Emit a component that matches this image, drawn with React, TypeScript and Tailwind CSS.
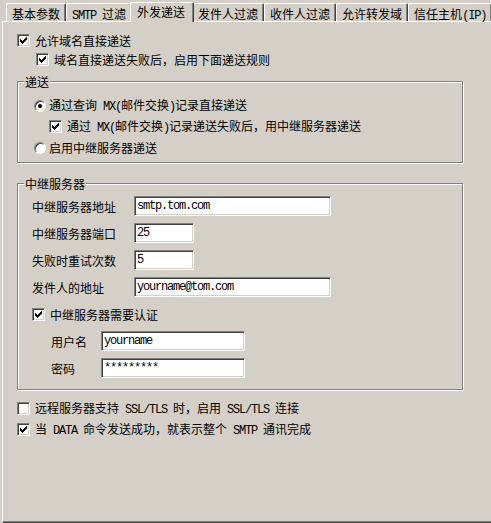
import React from 'react';

const tabs = ['基本参数', 'SMTP 过滤', '外发递送', '发件人过滤', '收件人过滤', '允许转发域', '信任主机(IP)'];

// SimSun-like metrics: CJK 12px, ASCII 6px monospace
const Txt = ({ s }: { s: string }) => (
  <>
    {s.split(/([\x20-\x7e]+)/).map((part, i) =>
      /[\x20-\x7e]/.test(part) ? (
        <span key={i} className="font-['Liberation_Mono',monospace] text-[12px] tracking-[-1.2px]">
          {part}
        </span>
      ) : (
        part
      )
    )}
  </>
);

const Box = ({ on }: { on?: boolean }) => (
  <div className="relative w-[13px] h-[13px] shrink-0 bg-white border border-t-[#808080] border-l-[#808080] border-b-white border-r-white shadow-[inset_1px_1px_0_#404040,inset_-1px_-1px_0_#d4d0c8]">
    {on && (
      <svg className="absolute left-0 top-0" width="11" height="11" viewBox="0 0 11 11" shapeRendering="crispEdges">
        <polygon points="2,4 4,6 9,1 9,4 4,9 2,7" fill="#000" />
      </svg>
    )}
  </div>
);

const Radio = ({ on }: { on?: boolean }) => (
  <div className="relative w-[12px] h-[12px] shrink-0 rounded-full bg-white border border-t-[#808080] border-l-[#808080] border-b-white border-r-white shadow-[inset_1px_1px_0_#404040]">
    {on && <div className="absolute left-[3px] top-[3px] w-[4px] h-[4px] rounded-full bg-black" />}
  </div>
);

const Check = ({ on, label }: { on?: boolean; label: string }) => (
  <div className="flex items-center gap-[5px] h-[13px]">
    <Box on={on} />
    <span>
      <Txt s={label} />
    </span>
  </div>
);

const Field = ({ className, v }: { className: string; v: string }) => (
  <div
    className={`h-[20px] flex items-center pl-[2px] bg-white border border-t-[#808080] border-l-[#808080] border-b-white border-r-white shadow-[inset_1px_1px_0_#404040,inset_-1px_-1px_0_#d4d0c8] font-['Liberation_Mono',monospace] text-[12px] tracking-[-1.2px] ${className}`}
  >
    {v}
  </div>
);

const Group = ({ title, className, children }: { title: string; className: string; children: React.ReactNode }) => (
  <div
    className={`relative w-[446px] border border-[#808080] shadow-[inset_1px_1px_0_#fff,1px_1px_0_#fff] ${className}`}
  >
    <span className="absolute left-[6px] top-[-7px] px-[1px] bg-[#d4d0c8]">{title}</span>
    {children}
  </div>
);

export default function App() {
  return (
    <div className="w-[491px] h-[523px] bg-[#d4d0c8] overflow-hidden text-[12px] leading-[13px] text-black font-['Noto_Sans_CJK_SC',sans-serif] whitespace-pre">
      {/* tab strip */}
      <div className="flex items-end h-[21px] pl-[6px]">
        {tabs.map((t, i) =>
          i === 2 ? (
            <div
              key={t}
              className="relative z-10 shrink-0 -mx-[2px] -mb-[1px] h-[20px] pt-[2px] pl-[6px] pr-[8px] bg-[#d4d0c8] border-l border-t border-white border-r border-r-[#404040] shadow-[inset_-1px_0_0_#808080] rounded-t-[2px]"
            >
              <Txt s={t} />
            </div>
          ) : (
            <div
              key={t}
              className="shrink-0 h-[18px] pt-[3px] pl-[5px] pr-[5px] border-l border-t border-white border-r border-r-[#404040] shadow-[inset_-1px_0_0_#808080] rounded-t-[2px]"
            >
              <Txt s={t} />
            </div>
          )
        )}
      </div>

      {/* panel */}
      <div className="h-[502px] ml-[2px] pt-[12px] pl-[14px] border-l border-t border-white border-b border-b-[#404040] shadow-[inset_0_-1px_0_#808080]">
        <Check on label="允许域名直接递送" />
        <div className="mt-[6px] ml-[19px]">
          <Check on label="域名直接递送失败后，启用下面递送规则" />
        </div>

        <Group title="递送" className="mt-[15px] h-[82px] pt-[17px] pl-[16px]">
          <div className="flex items-center gap-[3px] h-[13px]">
            <Radio on />
            <span>
              <Txt s="通过查询 MX(邮件交换)记录直接递送" />
            </span>
          </div>
          <div className="mt-[8px] ml-[15px]">
            <Check on label="通过 MX(邮件交换)记录递送失败后，用中继服务器递送" />
          </div>
          <div className="mt-[8px] flex items-center gap-[3px] h-[13px]">
            <Radio />
            <span>启用中继服务器递送</span>
          </div>
        </Group>

        <Group title="中继服务器" className="mt-[20px] h-[207px] pt-[12px] pl-[14px]">
          <div className="flex flex-col gap-[7px]">
            <div className="flex items-center h-[20px]">
              <span className="w-[102px]">中继服务器地址</span>
              <Field className="w-[197px]" v="smtp.tom.com" />
            </div>
            <div className="flex items-center h-[20px]">
              <span className="w-[102px]">中继服务器端口</span>
              <Field className="w-[60px]" v="25" />
            </div>
            <div className="flex items-center h-[20px]">
              <span className="w-[102px]">失败时重试次数</span>
              <Field className="w-[60px]" v="5" />
            </div>
            <div className="flex items-center h-[20px]">
              <span className="w-[102px]">发件人的地址</span>
              <Field className="w-[197px]" v="yourname@tom.com" />
            </div>
          </div>
          <div className="mt-[11px]">
            <Check on label="中继服务器需要认证" />
          </div>
          <div className="mt-[10px] ml-[19px] flex flex-col gap-[7px]">
            <div className="flex items-center h-[20px]">
              <span className="w-[50px]">用户名</span>
              <Field className="w-[144px]" v="yourname" />
            </div>
            <div className="flex items-center h-[20px]">
              <span className="w-[50px]">密码</span>
              <Field className="w-[144px]" v="*********" />
            </div>
          </div>
        </Group>

        <div className="mt-[12px]">
          <Check label="远程服务器支持 SSL/TLS 时，启用 SSL/TLS 连接" />
        </div>
        <div className="mt-[8px]">
          <Check on label="当 DATA 命令发送成功，就表示整个 SMTP 通讯完成" />
        </div>
      </div>
    </div>
  );
}
